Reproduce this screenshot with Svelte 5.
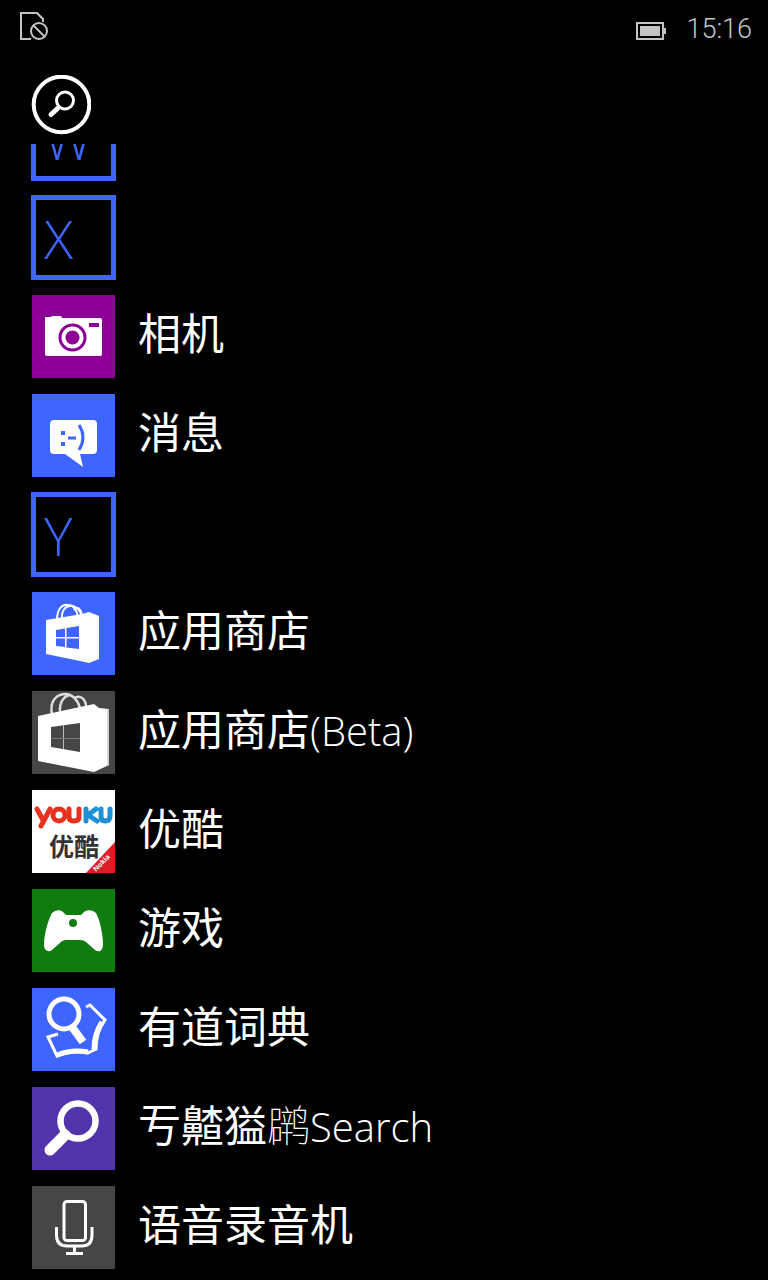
<script lang="ts">
  type Row = {
    label: string;
    icon?: string;
    color?: string;
    thin?: string; // glyph that falls back to a lighter face
    latin?: string;
  };

  const BLUE = "#3e65ff";
  const GREY = "#464646";

  const rows: Row[] = [
    { label: "W" },
    { label: "X" },
    { label: "相机", icon: "camera", color: "#8c0095" },
    { label: "消息", icon: "messages", color: BLUE },
    { label: "Y" },
    { label: "应用商店", icon: "store", color: BLUE },
    { label: "应用商店", latin: "(Beta)", icon: "store-beta", color: GREY },
    { label: "优酷", icon: "youku", color: "#ffffff" },
    { label: "游戏", icon: "games", color: "#107c10" },
    { label: "有道词典", icon: "dictionary", color: BLUE },
    { label: "亐齄獈", thin: "䴙", latin: "Search", icon: "search", color: "#5133ab" },
    { label: "语音录音机", icon: "recorder", color: GREY },
  ];
</script>

<main class="phone">
  <header class="status">
    <svg class="sim" viewBox="0 0 30 30" aria-label="No SIM">
      <path d="M12 28H2V2H18L24 8V11" />
      <circle cx="20" cy="20" r="8" />
      <path d="M14 14L26 26" />
    </svg>
    <svg class="battery" viewBox="0 0 30 18" aria-label="Battery">
      <path d="M1 1H27V17H1Z" fill="none" stroke="#c4c4c4" stroke-width="2" />
      <path d="M4 4H24V14H4ZM28 6H30V12H28Z" fill="#c4c4c4" />
    </svg>
    <time>15:16</time>
  </header>

  <div class="toolbar">
    <button class="find" aria-label="Search">
      <svg viewBox="0 0 60 60">
        <circle cx="30.500" cy="29.500" r="27.800" stroke-width="4" />
        <circle cx="34" cy="25.500" r="8.500" stroke-width="3" />
        <path d="M27 33L20 39.500" stroke-width="5" stroke-linecap="round" />
      </svg>
    </button>
  </div>

  <div class="viewport">
    <ul>
      {#each rows as row}
        <li>
          {#if !row.icon}
            <button class="letter">{row.label}</button>
          {:else}
            <a href="#{row.icon}">
              <svg class="tile" viewBox="0 0 83 83" style="background: {row.color}" aria-hidden="true">
                {#if row.icon === "camera"}
                  <path d="M13 23Q13 22 14 22H19Q19 21 21 21H28Q30 21 30 23H68Q70 23 70 25V59Q70 61 68 61H15Q13 61 13 59Z" fill="#fff" />
                  <circle cx="40.500" cy="42.500" r="12.500" fill="none" stroke={row.color} stroke-width="3" />
                  <circle cx="40.500" cy="42.500" r="7" fill={row.color} />
                  <path d="M57 28H67V32H57Z" fill={row.color} />
                {:else if row.icon === "messages"}
                  <path d="M22 26H61Q65 26 65 30V56Q65 60 61 60H48L51 73L33 60H22Q18 60 18 56V30Q18 26 22 26Z" fill="#fff" />
                  <path d="M29 37H33V41H29ZM29 48H33V52H29ZM36 42.500H44V45.500H36Z" fill={row.color} />
                  <path d="M47 31Q55 43 47 56" fill="none" stroke={row.color} stroke-width="3" />
                {:else if row.icon === "store"}
                  <g fill="none" stroke="#fff" stroke-width="2">
                    <path d="M25 28C25 17 30 12 36 13C42 13 45 19 46 26" />
                    <path d="M30 28C29 18 34 14 38 14C43 13 48 18 50 24M42 18C46 13 49 18 50 23" />
                  </g>
                  <path d="M14 28L50 22L57 20L67 24V67L57 71L48 69L14 62Z" fill="#fff" />
                  <path d="M24 38L33 36.500V45H24ZM34.500 36L47 34V45H34.500ZM24 46.500H33V55L24 54ZM34.500 46.500H47V57L34.500 55.500Z" fill={row.color} />
                {:else if row.icon === "store-beta"}
                  <g fill="none" stroke="#ddd" stroke-width="2.500">
                    <path d="M20 24C17 8 26 3 34 3C42 4 46 10 48 17" />
                    <path d="M28 21C27 9 34 4 39 4M42 7C49 3 54 9 54 16" />
                  </g>
                  <path d="M6 25L62 13L67 17L77 18V74L62 81L6 70Z" fill="#fff" />
                  <path d="M76 18V75" stroke="#aaa" />
                  <path d="M19 36L48 32V61L19 56Z" fill={row.color} />
                  <path d="M31.500 34V58" stroke="#bbb" />
                  <path d="M19 47.500H48" stroke="#777" />
                {:else if row.icon === "youku"}
                  <g fill="none" stroke-width="5" stroke-linecap="round" stroke-linejoin="round">
                    <path d="M5 19L11 30M18 19L9 36M37 19V27Q37 31 42 31Q47 31 47 27V19" stroke="#e6321e" />
                    <ellipse cx="27" cy="25" rx="6" ry="6" stroke="#e6321e" />
                    <path d="M54 19V31M64 19L56 25L65 31M69 19V26Q69 31 73 31Q78 31 78 26V19" stroke="#1e90d8" />
                  </g>
                  <text x="17" y="66" class="brand">优酷</text>
                  <path d="M83 52V83H54Z" fill="#e01b28" />
                  <text class="ribbon" transform="translate(64 82) rotate(-46)">Nokia</text>
                {:else if row.icon === "games"}
                  <path d="M20 24C23 21 28 20 31 23L34 26H49L52 23C56 20 61 21 64 24C68 31 71 46 71 55C71 62 67 64 63 61L54 53Q52 51 48 51H34Q31 51 29 53L20 61C16 64 12 61 12 56C12 46 16 31 20 24Z" fill="#fff" />
                  <circle cx="41" cy="34" r="4" fill={row.color} />
                {:else if row.icon === "dictionary"}
                  <g fill="none" stroke="#fff">
                    <circle cx="32" cy="26" r="15" stroke-width="5" />
                    <path d="M40 39L51 54" stroke-width="8" />
                    <path d="M26 46L16 49L25 68Q40 62 56 65L64 61Q64 44 73 32L58 17L54 19" stroke-width="3" />
                    <path d="M25 67Q40 61 56 64M62 61Q62 46 70 34" stroke-width="5" />
                  </g>
                {:else if row.icon === "search"}
                  <circle cx="46" cy="34" r="17.500" fill="none" stroke="#fff" stroke-width="6.500" />
                  <path d="M33 48L18 63" stroke="#fff" stroke-width="11" stroke-linecap="round" />
                {:else if row.icon === "recorder"}
                  <g fill="none" stroke="#fff" stroke-width="3">
                    <rect x="32" y="15.500" width="21.500" height="39" rx="3" />
                    <path d="M24.500 41V49Q24.500 60 35 60H50Q60 60 60 49V41M42.500 60V67M34 67.500H51" />
                  </g>
                {/if}
              </svg>
              <span class="name">{row.label}{#if row.thin}<span class="thin">{row.thin}</span>{/if}{#if row.latin}<span class="latin">{row.latin}</span>{/if}</span>
            </a>
          {/if}
        </li>
      {/each}
    </ul>
  </div>
</main>

<style>
  :global(body) {
    margin: 0;
    background: #000;
  }

  .phone {
    display: flex;
    flex-direction: column;
    height: 100vh;
    overflow: hidden;
    background: #000;
    color: #fff;
    font-family: "Open Sans", "Noto Sans CJK SC", sans-serif;
    font-weight: 300;
  }

  .status {
    display: flex;
    align-items: center;
    flex: none;
    height: 62px;
    padding: 0 16px 0 19px;
    color: #c4c4c4;
  }

  .sim {
    width: 30px;
    height: 30px;
    margin-bottom: 10px;
    fill: none;
    stroke: #c4c4c4;
    stroke-width: 2;
  }

  .battery {
    width: 30px;
    height: 18px;
    margin-left: auto;
  }

  time {
    margin-left: 20px;
    padding-bottom: 4px;
    font-family: Roboto, "Open Sans", sans-serif;
    font-size: 27px;
  }

  .toolbar {
    flex: none;
    height: 69px;
    padding: 13px 31px 0;
  }

  button {
    padding: 0;
    background: none;
    color: inherit;
    font: inherit;
    cursor: pointer;
  }

  .find {
    display: block;
    width: 60px;
    height: 60px;
    border: 0;
  }

  .find svg {
    display: block;
    fill: none;
    stroke: #fff;
  }

  .viewport {
    flex: 1;
    min-height: 0;
    overflow: hidden;
  }

  /* list is scrolled part-way through the W header */
  ul {
    margin: -48px 0 0;
    padding: 0 31px;
    list-style: none;
  }

  li {
    height: 99px;
  }

  .letter {
    display: block;
    box-sizing: border-box;
    width: 85px;
    height: 85px;
    padding-left: 8px;
    border: 5px solid #3e65ff;
    color: #3e65ff;
    font-size: 54px;
    font-weight: 350;
    line-height: 77px;
    text-align: left;
  }

  a {
    display: flex;
    color: inherit;
    text-decoration: none;
    white-space: nowrap;
  }

  .tile {
    flex: none;
    width: 83px;
    height: 83px;
    margin: 1px;
  }

  .name {
    margin-left: 22px;
    font-size: 43px;
    font-weight: 400;
    line-height: 80px;
  }

  .thin {
    font-weight: 100;
  }

  .latin {
    font-size: 40px;
    font-weight: 300;
  }

  .brand {
    fill: #333;
    font-size: 25px;
    font-weight: 700;
  }

  .ribbon {
    fill: #fff;
    font-size: 7px;
    font-weight: 700;
  }
</style>
